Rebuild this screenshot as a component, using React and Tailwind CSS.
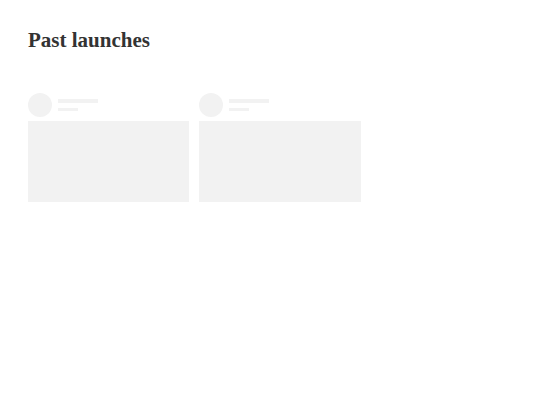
import React from 'react';

const SkeletonCard = () => (
  <div className="flex flex-col">
    <div className="flex items-start gap-[6px]">
      <div className="w-6 h-6 rounded-full bg-[#f2f2f2]" />
      <div className="flex flex-col pt-[6px] gap-[5px]">
        <div className="w-10 h-1 bg-[#f2f2f2]" />
        <div className="w-5 h-[3px] bg-[#f2f2f2]" />
      </div>
    </div>
    <div className="mt-[4px] h-[81px] bg-[#f2f2f2]" />
  </div>
);

export default function App() {
  return (
    <div className="w-[560px] h-[420px] bg-white px-7 pt-[26px]" style={{ fontFamily: '"Liberation Serif", serif' }}>
      <h1 className="text-[21px] leading-[28px] font-bold text-[#333333]">Past launches</h1>
      <div className="mt-[39px] grid grid-cols-3 gap-[10px]">
        <SkeletonCard />
        <SkeletonCard />
      </div>
    </div>
  );
}
